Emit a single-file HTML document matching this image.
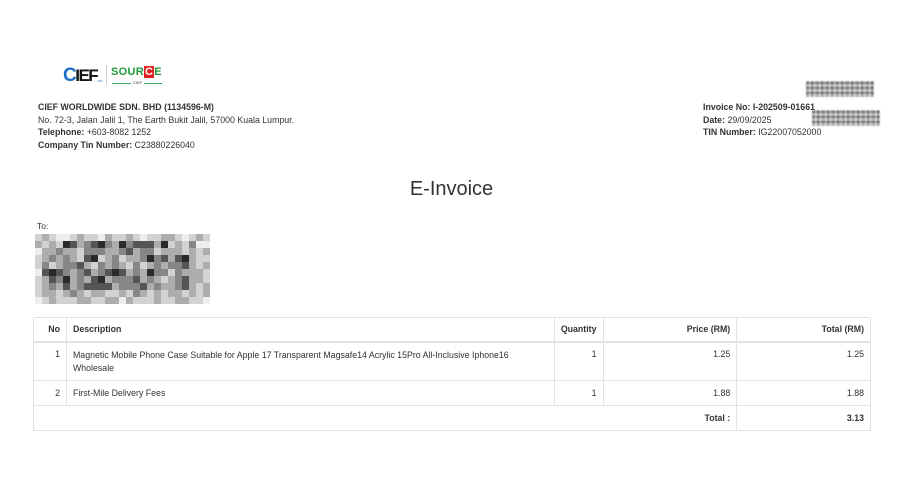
<!DOCTYPE html>
<html><head><meta charset="utf-8"><style>
*{margin:0;padding:0;box-sizing:border-box}
body{width:900px;height:500px;background:#fff;font-family:"Liberation Sans",Arial,sans-serif;color:#333;position:relative;overflow:hidden;font-size:8.8px}
.abs{position:absolute;white-space:nowrap}
b{font-weight:bold;color:#333}
.l{line-height:12.5px}
.mos{position:absolute;left:35px;top:234px;display:grid;grid-template-columns:repeat(25,7px);grid-auto-rows:7px}
.mos i{display:block}
.a{background:#eee}.b{background:#d2d2d2}.c{background:#adadad}.d{background:#868686}.e{background:#555}.f{background:#2a2a2a}
.red{position:absolute;background:repeating-linear-gradient(90deg,#8a8a8a 0 3px,#c4c4c4 3px 5px,#6e6e6e 5px 7px,#b0b0b0 7px 10px);filter:blur(0.6px)}
.red:after{content:"";position:absolute;inset:0;background:repeating-linear-gradient(0deg,rgba(255,255,255,.35) 0 3px,rgba(0,0,0,.15) 3px 5px)}
table{position:absolute;left:33px;top:317px;width:838px;border-collapse:collapse;font-size:8.8px;color:#333}
td,th{border:1px solid #e2e2e2;padding:0 6px;vertical-align:top}
th{font-weight:bold;height:24px;vertical-align:middle;border-bottom:2px solid #e2e2e2;text-align:left}
.r{text-align:right}
</style></head><body>
<div class="abs" style="left:63px;top:65px;font-weight:bold;font-size:17px;letter-spacing:-1.5px;color:#111"><span style="color:#1d6fc4;font-size:19px">C</span>IEF</div>
<div class="abs" style="left:97px;top:79px;font-size:3px;color:#1d6fc4">LTD</div>
<div class="abs" style="left:106px;top:65px;width:1px;height:20px;background:#ccc"></div>
<div class="abs" style="left:111px;top:66px;font-weight:bold;font-size:11px;color:#1f9a3a;letter-spacing:.3px">SOUR<span style="background:#e02020;color:#fff;padding:0 1px">C</span>E</div>
<div class="abs" style="left:112px;top:83px;width:50px;height:1px;background:#3aa655"></div>
<div class="abs" style="left:131px;top:80px;font-size:4px;background:#fff;padding:0 2px;color:#333">CIEF</div>

<div class="abs l" style="left:38px;top:101px"><b>CIEF WORLDWIDE SDN. BHD (1134596-M)</b><br>No. 72-3, Jalan Jalil 1, The Earth Bukit Jalil, 57000 Kuala Lumpur.<br><b>Telephone:</b> +603-8082 1252<br><b>Company Tin Number:</b> C23880226040</div>

<div class="red" style="left:806px;top:81px;width:68px;height:16px"></div>
<div class="abs l" style="left:703px;top:101px"><b>Invoice No: I-202509-01661</b><br><b>Date:</b> 29/09/2025<br><b>TIN Number:</b> IG22007052000</div>
<div class="red" style="left:812px;top:110px;width:68px;height:16px"></div>

<div class="abs" style="left:0;width:903px;text-align:center;top:178px;font-size:20px;color:#333">E-Invoice</div>
<div class="abs" style="left:37px;top:221px;font-size:8.5px">To:</div>
<div class="mos">
<i class=b></i><i class=c></i><i class=b></i><i class=a></i><i class=a></i><i class=b></i><i class=c></i><i class=b></i><i class=b></i><i class=a></i><i class=c></i><i class=b></i><i class=b></i><i class=c></i><i class=b></i><i class=a></i><i class=b></i><i class=b></i><i class=c></i><i class=c></i><i class=b></i><i class=a></i><i class=b></i><i class=c></i><i class=b></i>
<i class=c></i><i class=b></i><i class=c></i><i class=b></i><i class=f></i><i class=e></i><i class=c></i><i class=d></i><i class=e></i><i class=f></i><i class=d></i><i class=c></i><i class=f></i><i class=d></i><i class=e></i><i class=e></i><i class=e></i><i class=c></i><i class=f></i><i class=b></i><i class=c></i><i class=b></i><i class=d></i><i class=a></i><i class=a></i>
<i class=a></i><i class=c></i><i class=c></i><i class=d></i><i class=c></i><i class=c></i><i class=b></i><i class=d></i><i class=d></i><i class=d></i><i class=c></i><i class=c></i><i class=d></i><i class=e></i><i class=c></i><i class=d></i><i class=d></i><i class=b></i><i class=c></i><i class=c></i><i class=c></i><i class=b></i><i class=c></i><i class=b></i><i class=c></i>
<i class=b></i><i class=c></i><i class=d></i><i class=c></i><i class=d></i><i class=c></i><i class=b></i><i class=e></i><i class=f></i><i class=b></i><i class=c></i><i class=d></i><i class=b></i><i class=c></i><i class=c></i><i class=d></i><i class=f></i><i class=d></i><i class=e></i><i class=c></i><i class=e></i><i class=f></i><i class=c></i><i class=b></i><i class=b></i>
<i class=b></i><i class=d></i><i class=b></i><i class=c></i><i class=d></i><i class=d></i><i class=e></i><i class=c></i><i class=b></i><i class=d></i><i class=c></i><i class=d></i><i class=c></i><i class=b></i><i class=d></i><i class=b></i><i class=c></i><i class=d></i><i class=c></i><i class=d></i><i class=d></i><i class=e></i><i class=c></i><i class=b></i><i class=c></i>
<i class=a></i><i class=e></i><i class=f></i><i class=e></i><i class=d></i><i class=c></i><i class=d></i><i class=e></i><i class=c></i><i class=d></i><i class=e></i><i class=f></i><i class=e></i><i class=c></i><i class=d></i><i class=c></i><i class=f></i><i class=d></i><i class=d></i><i class=b></i><i class=d></i><i class=c></i><i class=c></i><i class=c></i><i class=b></i>
<i class=b></i><i class=c></i><i class=e></i><i class=d></i><i class=f></i><i class=c></i><i class=d></i><i class=c></i><i class=e></i><i class=f></i><i class=c></i><i class=d></i><i class=d></i><i class=d></i><i class=e></i><i class=c></i><i class=d></i><i class=c></i><i class=b></i><i class=c></i><i class=d></i><i class=e></i><i class=c></i><i class=c></i><i class=b></i>
<i class=b></i><i class=c></i><i class=d></i><i class=c></i><i class=e></i><i class=c></i><i class=d></i><i class=e></i><i class=e></i><i class=e></i><i class=e></i><i class=c></i><i class=d></i><i class=d></i><i class=d></i><i class=e></i><i class=c></i><i class=d></i><i class=c></i><i class=c></i><i class=d></i><i class=e></i><i class=c></i><i class=b></i><i class=c></i>
<i class=b></i><i class=c></i><i class=c></i><i class=b></i><i class=c></i><i class=d></i><i class=c></i><i class=b></i><i class=c></i><i class=c></i><i class=b></i><i class=b></i><i class=c></i><i class=b></i><i class=d></i><i class=c></i><i class=b></i><i class=c></i><i class=b></i><i class=c></i><i class=c></i><i class=b></i><i class=c></i><i class=b></i><i class=c></i>
<i class=a></i><i class=b></i><i class=c></i><i class=b></i><i class=b></i><i class=b></i><i class=c></i><i class=c></i><i class=b></i><i class=b></i><i class=c></i><i class=c></i><i class=a></i><i class=c></i><i class=b></i><i class=b></i><i class=b></i><i class=c></i><i class=b></i><i class=b></i><i class=c></i><i class=c></i><i class=b></i><i class=b></i><i class=a></i>
</div>

<table>
<colgroup><col style="width:33px"><col style="width:489px"><col style="width:48px"><col style="width:134px"><col style="width:134px"></colgroup>
<tr><th class="r">No</th><th>Description</th><th style="text-align:center">Quantity</th><th class="r">Price (RM)</th><th class="r">Total (RM)</th></tr>
<tr style="height:39px"><td class="r" style="padding-top:6px">1</td><td style="padding-top:6px;line-height:13px">Magnetic Mobile Phone Case Suitable for Apple 17 Transparent Magsafe14 Acrylic 15Pro All-Inclusive Iphone16<br>Wholesale</td><td class="r" style="padding-top:6px">1</td><td class="r" style="padding-top:6px">1.25</td><td class="r" style="padding-top:6px">1.25</td></tr>
<tr style="height:25px"><td class="r" style="vertical-align:middle">2</td><td style="vertical-align:middle">First-Mile Delivery Fees</td><td class="r" style="vertical-align:middle">1</td><td class="r" style="vertical-align:middle">1.88</td><td class="r" style="vertical-align:middle">1.88</td></tr>
<tr style="height:25px"><td colspan="4" class="r" style="vertical-align:middle;font-weight:bold">Total :</td><td class="r" style="vertical-align:middle;font-weight:bold">3.13</td></tr>
</table>
</body></html>
